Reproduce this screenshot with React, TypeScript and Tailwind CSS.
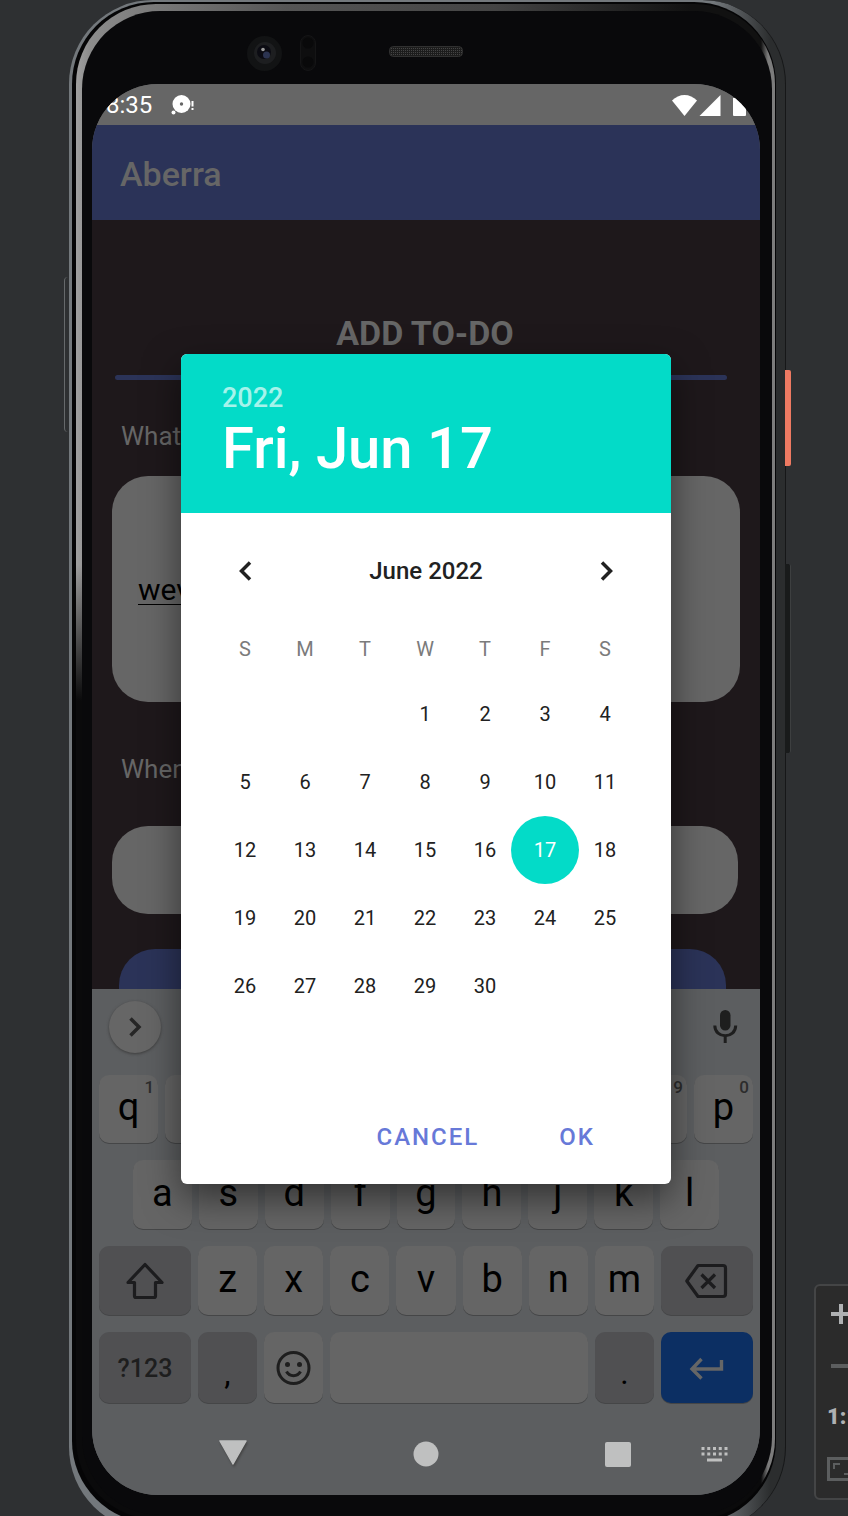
import React from "react";

const weeks: (number | null)[][] = [
  [null, null, null, 1, 2, 3, 4],
  [5, 6, 7, 8, 9, 10, 11],
  [12, 13, 14, 15, 16, 17, 18],
  [19, 20, 21, 22, 23, 24, 25],
  [26, 27, 28, 29, 30, null, null],
];
const weekdays = ["S", "M", "T", "W", "T", "F", "S"];

function StatusBar() {
  return (
    <div className="flex h-[41px] items-center bg-[#666666] pl-[14px] text-white">
      <span className="pt-px text-[24px] leading-[40px]">8:35</span>
      <svg className="ml-[18px] h-[22px] w-[26px]" viewBox="0 0 26 22" aria-label="Notification">
        <circle cx="11.500" cy="10" r="9" fill="#fff" />
        <circle cx="11.500" cy="10" r="1.700" fill="#666" />
        <circle cx="3.500" cy="18.500" r="2" fill="#fff" />
        <path d="M21.500 7h2v5.500h-2zM21.500 14h2v2h-2z" fill="#fff" />
      </svg>
      <svg className="ml-auto mr-[13px] h-[22px] w-[76px]" viewBox="0 0 76 22" fill="#fff" aria-label="Wi-Fi, signal and battery">
        <path d="M13.500 22 1 6.500C8 -1 19-1 26 6.500z" />
        <path d="M28.500 22 49.500 1V22z" />
        <path d="M62 4h3V1h7v3h3v17q0 1-1 1H63q-1 0-1-1z" />
      </svg>
    </div>
  );
}

function Field({ id, label, children }: { id: string; label: string; children: React.ReactNode }) {
  return (
    <div className="flex flex-col">
      <label htmlFor={id} className="pl-[9px] text-[26px] leading-[32px] text-[#666666]">
        {label}
      </label>
      {children}
    </div>
  );
}

function TodoForm() {
  return (
    <main className="h-[769px] overflow-hidden bg-[#1e181b] px-5 pt-[90px]">
      <h2 className="pr-[2px] text-center text-[34px] font-bold leading-[46px] text-[#666666]">ADD TO-DO</h2>
      <div className="ml-[3px] mr-[13px] mt-[19px] h-[5px] rounded-full bg-[#2b3358]" />
      <div className="mt-10">
        <Field id="what" label="What">
          <textarea
            id="what"
            defaultValue="wev"
            className="mt-[24px] h-[226px] w-full resize-none rounded-[36px] bg-[#666666] px-[26px] pt-[94px] text-[30px] leading-[40px] text-black underline decoration-1 underline-offset-4 outline-none"
          />
        </Field>
      </div>
      <div className="mt-[51px]">
        <Field id="when" label="When">
          <input id="when" className="mr-[2px] mt-[41px] h-[88px] rounded-[36px] bg-[#666666] px-[26px] outline-none" />
        </Field>
      </div>
      <button aria-label="Add" className="ml-[7px] mt-[35px] block h-[88px] w-[calc(100%-21px)] rounded-[36px] bg-[#2b3358]" />
    </main>
  );
}

const keyBase = "relative flex items-center justify-center rounded-[10px] shadow-[0_1px_0_#454647]";

function Key({ label, hint }: { label: string; hint?: string }) {
  return (
    <button className={keyBase + " flex-1 bg-[#656565] pb-1 text-[38px] leading-[44px] text-black"}>
      {label}
      {hint && (
        <span className="absolute right-1 top-[2px] text-[17px] font-medium leading-[20px] text-[#2c2c2c]">{hint}</span>
      )}
    </button>
  );
}

function Keyboard() {
  return (
    <section className="bg-[#5c5e60] px-[7px]" aria-label="Keyboard">
      <div className="flex h-[86px] items-center justify-between pb-[10px] pl-[10px] pr-[14px]">
        <button aria-label="Expand" className="flex size-[52px] items-center justify-center rounded-full bg-[#666666] shadow-[0_1px_3px_#3c3c3c]">
          <svg className="h-5 w-4" viewBox="0 0 16 20" fill="none" stroke="#262626" strokeWidth="3.500">
            <path d="M3.500 1.500 12 10l-8.500 8.500" />
          </svg>
        </button>
        <button aria-label="Voice input">
          <svg className="h-[34px] w-[28px]" viewBox="0 0 28 34">
            <rect x="9" y="0" width="10.500" height="20.500" rx="5.250" fill="#1e1e1e" />
            <path d="M3.800 15.500c0 13.700 20.900 13.700 20.900 0M14.200 26v7" fill="none" stroke="#1e1e1e" strokeWidth="3" />
          </svg>
        </button>
      </div>
      <div className="flex flex-col gap-[17px]">
        <div className="flex h-[68px] gap-[7px]">
          {"qwertyuiop".split("").map((k, i) => (
            <Key key={k} label={k} hint={String((i + 1) % 10)} />
          ))}
        </div>
        <div className="flex h-[69px] gap-[7px] px-[34px]">
          {"asdfghjkl".split("").map((k) => (
            <Key key={k} label={k} />
          ))}
        </div>
        <div className="flex h-[69px] gap-[7px]">
          <button aria-label="Shift" className={keyBase + " w-[92px] bg-[#505052]"}>
            <svg className="size-10" viewBox="0 0 40 40" fill="none" stroke="#1c1c1e" strokeWidth="3.200" strokeLinejoin="round">
              <path d="M20 3.500 37 21.500H30.500V35q0 1.500-1.500 1.500H11q-1.500 0-1.500-1.500V21.500H3z" />
            </svg>
          </button>
          {"zxcvbnm".split("").map((k) => (
            <Key key={k} label={k} />
          ))}
          <button aria-label="Backspace" className={keyBase + " w-[92px] bg-[#505052]"}>
            <svg className="h-9 w-11" viewBox="0 0 44 36" fill="none" stroke="#1c1c1e" strokeWidth="3.200" strokeLinejoin="round">
              <path d="M13 2.500H38q2.500 0 2.500 2.500V31q0 2.500-2.500 2.500H13L1.800 18z" />
              <path d="M16.500 11.500 30 25M30 11.500 16.500 25" />
            </svg>
          </button>
        </div>
        <div className="flex h-[71px] gap-[7px]">
          <button className={keyBase + " w-[92px] bg-[#505052] pt-[2px] text-[25px] font-medium text-[#1e1e1e]"}>?123</button>
          <button className={keyBase + " w-[59px] bg-[#505052] pt-[10px] text-[32px] text-black"}>,</button>
          <button aria-label="Emoji" className={keyBase + " w-[59px] bg-[#656565]"}>
            <svg className="size-9" viewBox="0 0 36 36" fill="none" stroke="#1e1e1e" strokeWidth="3">
              <circle cx="17.500" cy="18" r="15.500" />
              <circle cx="11.500" cy="14.500" r="2.500" fill="#1e1e1e" stroke="none" />
              <circle cx="23.500" cy="14.500" r="2.500" fill="#1e1e1e" stroke="none" />
              <path d="M10.500 21.500c3 5.500 11 5.500 14 0" />
            </svg>
          </button>
          <button aria-label="Space" className={keyBase + " flex-1 bg-[#656565]"} />
          <button className={keyBase + " w-[59px] bg-[#505052] pt-[10px] text-[32px] text-black"}>.</button>
          <button aria-label="Enter" className={keyBase + " w-[92px] bg-[#0c2f63]"}>
            <svg className="h-6 w-9" viewBox="0 0 36 24" fill="none" stroke="#666" strokeWidth="3.400">
              <path d="M32.500 4v9H4M12.500 3 3 13 12.500 22.500" />
            </svg>
          </button>
        </div>
      </div>
    </section>
  );
}

function NavBar() {
  return (
    <nav className="flex h-[92px] items-start justify-between bg-[#5c5e60] pl-[126px] pr-[30px] pt-[34px]" aria-label="System">
      <button aria-label="Back">
        <svg className="h-8 w-[30px] drop-shadow-[1px_2px_1px_#444]" viewBox="0 0 30 32">
          <path d="M2 4h26L15 27z" fill="#bfc0c0" stroke="#bfc0c0" strokeWidth="1.500" strokeLinejoin="round" />
        </svg>
      </button>
      <button aria-label="Home" className="ml-[2px]">
        <svg className="size-8" viewBox="0 0 32 32">
          <circle cx="16" cy="17" r="12.500" fill="#bfc0c0" />
        </svg>
      </button>
      <div className="flex gap-[64px]">
        <button aria-label="Overview">
          <svg className="size-8" viewBox="0 0 32 32">
            <rect x="3" y="5" width="26" height="25" rx="2" fill="#bfc0c0" />
          </svg>
        </button>
        <button aria-label="Switch keyboard">
          <svg className="size-8" viewBox="0 0 32 32" stroke="#bfc0c0" strokeWidth="3">
            <path d="M3.500 11.500h26.500M3.500 17h26.500" strokeDasharray="3 2.750" />
            <path d="M9 23h15" />
          </svg>
        </button>
      </div>
    </nav>
  );
}

function DatePicker() {
  return (
    <div role="dialog" aria-label="Choose a date" className="flex w-[490px] flex-col overflow-hidden rounded-[6px] bg-white shadow-[0_14px_36px_rgba(0,0,0,0.5)]">
      <header className="flex h-[159px] flex-col items-start bg-[#03dbc8] pl-[41px] pt-[27px]">
        <button className="text-[27px] font-medium leading-[34px] text-[#a5f3eb]">2022</button>
        <button className="text-[58px] font-medium leading-[66px] text-white">Fri, Jun 17</button>
      </header>
      <div className="flex h-[116px] items-center justify-between px-[54px]">
        <button aria-label="Previous month">
          <svg className="h-[22px] w-[20px]" viewBox="0 0 20 22" fill="none" stroke="#212121" strokeWidth="3.500">
            <path d="M15 2.500 6.500 11l8.500 8.500" />
          </svg>
        </button>
        <h3 className="text-[24px] font-medium leading-[30px] text-[#212121]">June 2022</h3>
        <button aria-label="Next month">
          <svg className="h-[22px] w-[20px]" viewBox="0 0 20 22" fill="none" stroke="#212121" strokeWidth="3.500">
            <path d="M5 2.500 13.500 11 5 19.500" />
          </svg>
        </button>
      </div>
      <div className="pl-[34px] pr-9">
        <table className="w-full table-fixed border-collapse text-center text-[20px] leading-[24px] text-[#212121]">
          <thead>
            <tr className="h-[51px] align-top text-[#7b7b7b]">
              {weekdays.map((d, i) => (
                <th key={i} className="p-0 pt-2 font-normal">{d}</th>
              ))}
            </tr>
          </thead>
          <tbody>
            {weeks.map((w, i) => (
              <tr key={i}>
                {w.map((d, j) => (
                  <td key={j} className="h-[68px] p-0">
                    {d !== null && (
                      <div className="flex justify-center">
                        <button
                          className={
                            d === 17
                              ? "size-[68px] shrink-0 rounded-full bg-[#03dbc8] text-white"
                              : "size-[60px] shrink-0 rounded-full"
                          }
                        >
                          {d}
                        </button>
                      </div>
                    )}
                  </td>
                ))}
              </tr>
            ))}
          </tbody>
        </table>
      </div>
      <footer className="flex h-[164px] items-start justify-end gap-[80px] pr-[76px] pt-[102px] text-[24px] font-medium leading-[30px] text-[#6779d8]">
        <button className="tracking-[2px]">CANCEL</button>
        <button className="tracking-[2px]">OK</button>
      </footer>
    </div>
  );
}

function ZoomPanel() {
  return (
    <aside className="absolute -right-4 bottom-4 flex h-[216px] w-[50px] flex-col items-start rounded-[6px] border-2 border-[#444546] bg-[#2b2b2b] pl-[11px]" aria-label="Zoom">
      <button aria-label="Zoom in" className="h-[56px]">
        <svg className="h-5 w-6" viewBox="0 0 24 20" stroke="#afb1b3" strokeWidth="4">
          <path d="M4 10h20M14 0v20" />
        </svg>
      </button>
      <button aria-label="Zoom out" className="h-[48px]">
        <svg className="h-5 w-6" viewBox="0 0 24 20" stroke="#5c5e5f" strokeWidth="4">
          <path d="M4 10h20" />
        </svg>
      </button>
      <button className="h-[54px] text-[22px] font-black leading-[24px] text-[#afb1b3]">1:1</button>
      <button aria-label="Fit to window" className="h-[50px]">
        <svg className="h-6 w-8" viewBox="0 0 32 24" fill="none" stroke="#5c5e5f">
          <path d="M1.500 1.500h30v21h-30z" strokeWidth="3" />
          <path d="M7 12V7h6M17 17h6" strokeWidth="2" />
        </svg>
      </button>
    </aside>
  );
}

function Bezel() {
  return (
    <div className="flex h-[73px] items-start pl-[153px] pt-[23px]">
      <svg className="h-10 w-[74px]" viewBox="0 0 74 40">
        <circle cx="19.500" cy="19.500" r="17.500" fill="#121314" />
        <circle cx="20" cy="19" r="11" fill="#1d1e20" />
        <circle cx="19" cy="18" r="7" fill="#0b0b12" />
        <circle cx="21.500" cy="21" r="3.500" fill="#2b3350" />
        <circle cx="18" cy="15.500" r="1.800" fill="#9a9a9a" />
        <rect x="55.500" y="1.500" width="15" height="35" rx="7.500" fill="#0e0e0f" stroke="#151516" />
        <circle cx="63" cy="9" r="5.500" fill="#09090a" />
        <circle cx="63" cy="28" r="5.500" fill="#09090a" />
      </svg>
      <svg className="ml-[70px] mt-3 h-[11px] w-[74px]" viewBox="0 0 74 11">
        <defs>
          <pattern id="mesh" width="2" height="2" patternUnits="userSpaceOnUse">
            <rect width="2" height="2" fill="#1c1c1c" />
            <rect width="1" height="1" fill="#444" />
          </pattern>
        </defs>
        <rect x=".5" y=".5" width="73" height="10" rx="4" fill="url(#mesh)" stroke="#303030" />
      </svg>
    </div>
  );
}

export default function App() {
  return (
    <div className="relative flow-root overflow-hidden bg-[#2e3032] font-['Roboto',sans-serif]">
      <div className="relative -mb-[15px] ml-[69px] mr-[62px]">
        <div className="absolute -right-[5px] top-[370px] h-[96px] w-[6px] rounded-r-[2px] bg-[#ee7a62]" />
        <div className="absolute -right-[5px] top-[564px] h-[189px] w-[6px] rounded-r-[2px] border-r border-[#3d3f40] bg-[#191b1b]" />
        <div className="absolute -left-[5px] top-[277px] h-[155px] w-[5px] rounded-l-[4px] border-l border-[#66696b]" />
        <div className="rounded-[84px] border-r border-[#161718] bg-[linear-gradient(to_right,#73787c,#73787c_90%,#2b2d2e_98%)] pb-2 pl-[3px] pr-[9px] pt-[2px]">
          <div className="rounded-[82px] bg-[#050506] pb-1 pl-1 pr-px pt-[2px]">
            <div className="rounded-[80px] bg-[linear-gradient(to_right,transparent_98%,#7c7c7c_99%),linear-gradient(to_bottom,transparent_37%,#0a0a0b_46%),linear-gradient(to_right,#a0a0a0,#8c8c8c_2%,#555_30%,#444_60%,#111_88%)] pb-1 pl-[6px] pr-[3px] pt-[7px]">
              <div className="rounded-[78px] bg-[#09090b] pb-5 pl-[10px] pr-3">
                <Bezel />
                <div className="relative overflow-hidden rounded-[66px] bg-[#5c5e60]">
                  <StatusBar />
                  <header className="flex h-[95px] items-center bg-[#2b3358] pl-7 pt-[2px]">
                    <h1 className="text-[34px] font-medium leading-[40px] text-[#666666]">Aberra</h1>
                  </header>
                  <TodoForm />
                  <Keyboard />
                  <NavBar />
                  <div className="absolute inset-x-0 top-[270px] flex justify-center">
                    <DatePicker />
                  </div>
                </div>
              </div>
            </div>
          </div>
        </div>
      </div>
      <ZoomPanel />
    </div>
  );
}
